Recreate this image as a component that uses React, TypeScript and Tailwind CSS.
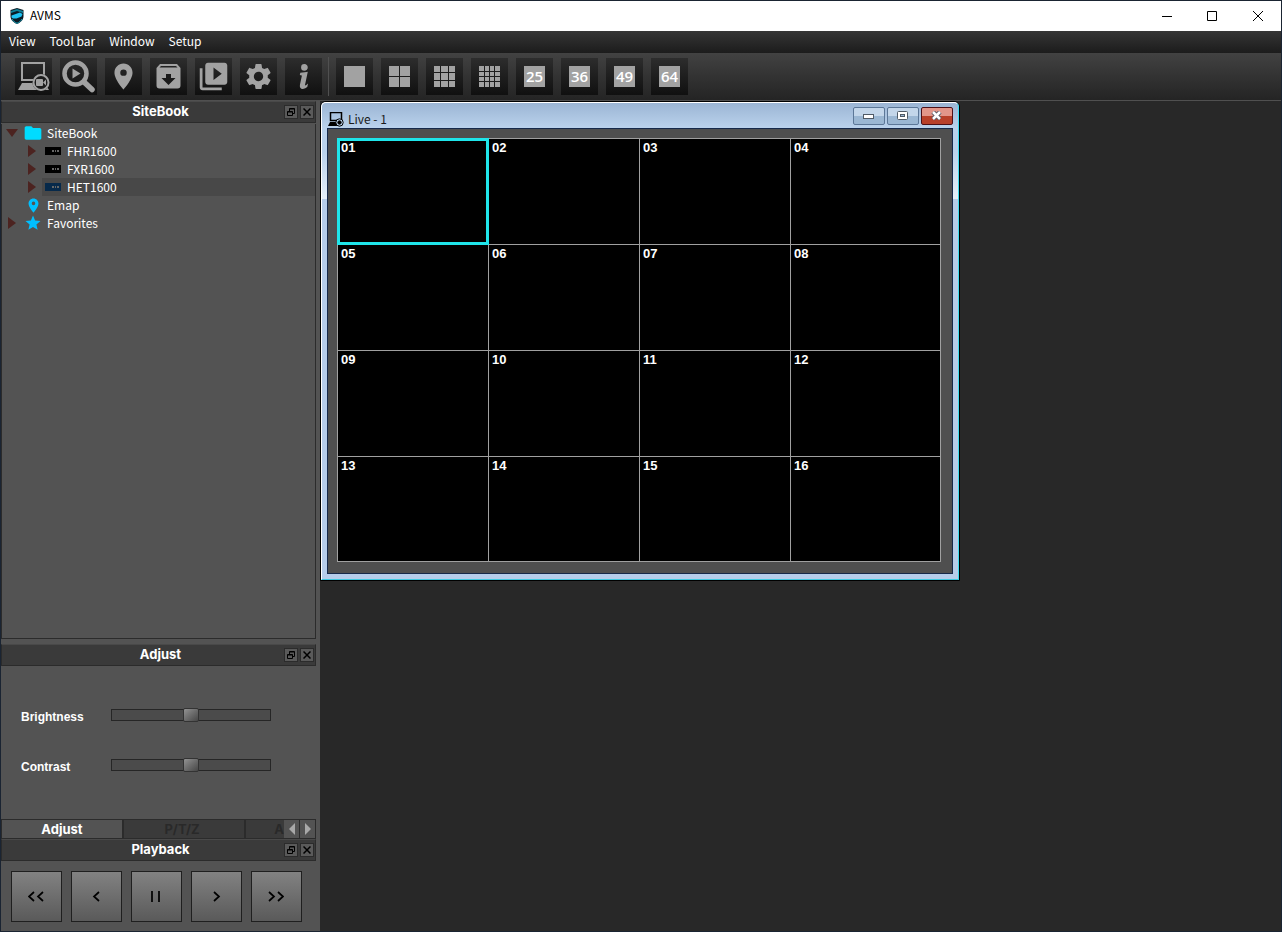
import { useState } from "react";
import type { FC, ReactNode } from "react";
import { MdFolder, MdLocationOn, MdSettings, MdStar, MdVideoLibrary } from "react-icons/md";
import { BsInfoLg } from "react-icons/bs";

const MENUS = ["View", "Tool bar", "Window", "Setup"];
const CHANNELS = Array.from({ length: 16 }, (_, i) => String(i + 1).padStart(2, "0"));

const ShieldLogo: FC = () => (
  <svg width="14" height="16" viewBox="0 0 14 16">
    <path d="M7 0 13.500 2v6c0 4-3 6.500-6.500 8C3.500 14.500.5 12 .5 8V2z" fill="#0b1c26" />
    <path d="M1 3 7 1l6 2v2L7 3 1 5z" fill="#0f7f96" />
    <path d="M1.500 7.500 10 4.500l2.500 1.500-1 2.500-5 2H3l-1.500-1z" fill="#1fc3f3" />
    <path d="M2 11c1 2 3 3.500 5 4.300 2-.8 4-2.300 5-4.300" fill="none" stroke="#12a5c0" />
  </svg>
);

const LiveIcon: FC = () => (
  <svg width="33" height="33" viewBox="0 0 33 33" fill="none" stroke="currentColor">
    <path d="M5 3h22v17H5z" strokeWidth="2" />
    <path d="M5 23h18v7H1z" fill="currentColor" stroke="none" />
    <path d="M29 25l3 5h-5z" fill="currentColor" stroke="none" />
    <circle cx="24" cy="22.500" r="8.500" fill="#1c1c1c" stroke="none" />
    <circle cx="24" cy="22.500" r="7.500" strokeWidth="2" />
    <rect x="19" y="19" width="7" height="7" rx="1" fill="currentColor" stroke="none" />
    <path d="m26 22.500 3-3v6z" fill="currentColor" stroke="none" />
  </svg>
);

const LiveSmallIcon: FC = () => (
  <svg width="16" height="15" viewBox="0 0 16 15" fill="none" stroke="#000">
    <path d="M2.500 8.500v-8h11v8z" strokeWidth="1.500" />
    <path d="M2 10h8v4H0z" fill="#000" stroke="none" />
    <circle cx="11.500" cy="10.500" r="3.700" fill="#bad2ec" />
    <circle cx="11.500" cy="10.500" r="1.700" fill="#000" />
  </svg>
);

const SearchPlayIcon: FC = () => (
  <svg width="33" height="33" viewBox="0 0 33 33" fill="none" stroke="currentColor">
    <circle cx="13.500" cy="13.500" r="11" strokeWidth="4.500" />
    <path d="m22 22 8 7.500" strokeWidth="5.500" strokeLinecap="round" />
    <path d="m10.500 8.500 8 5-8 5z" fill="currentColor" stroke="none" />
  </svg>
);

const BackupIcon: FC = () => (
  <svg width="25" height="25" viewBox="0 0 25 25" fill="currentColor">
    <path d="M4 0h17l3.500 4v17.500a3 3 0 0 1-3 3h-18a3 3 0 0 1-3-3V4z" />
    <path d="M3.500 3.500 5 2h15l1.500 1.500z" fill="#222" />
    <path d="M10 10h5v4h4.500l-7 7-7-7H10z" fill="#1a1a1a" />
  </svg>
);

const DvrIcon: FC<{ color: string }> = ({ color }) => (
  <svg width="16" height="8" viewBox="0 0 16 8">
    <rect width="16" height="8" fill={color} />
    <path d="M7 3h2v2H7zM10 3h1v2h-1zM12 3h2v2h-2z" fill="#666" />
  </svg>
);

const Grid: FC<{ lines: number[] }> = ({ lines }) => (
  <svg width="21" height="21" viewBox="0 0 21 21">
    <rect width="21" height="21" fill="#a2a2a2" />
    {lines.map((n) => (
      <path key={n} d={`M${n} 0v21M0 ${n}h21`} stroke="#1c1c1c" />
    ))}
  </svg>
);

const ToolButton: FC<{ label: string; children: ReactNode }> = ({ label, children }) => (
  <button
    type="button"
    aria-label={label}
    className="w-[37px] h-[37px] flex items-center justify-center bg-linear-to-b from-[#2d2d2d] to-[#101010] text-[#a2a2a2]"
  >
    {children}
  </button>
);

const NumberTile: FC<{ value: number }> = ({ value }) => (
  <span className="w-[21px] h-[21px] bg-[#a2a2a2] text-white text-[15px] leading-[21px] font-semibold font-['Open_Sans',sans-serif] text-center">
    {value}
  </span>
);

const PanelHeader: FC<{ title: string }> = ({ title }) => (
  <div className="relative h-[22px] shrink-0 mr-1 bg-[#3a3a3a] border border-[#2b2b2b] border-t-[#494949]">
    <h2 className="pl-1 text-center text-white text-[13px] leading-[18px] font-bold font-['Inter',sans-serif]">{title}</h2>
    <div className="absolute right-px top-[3px] flex gap-[2px]">
      <button type="button" aria-label={`Float ${title}`} className="w-[14px] h-[14px] flex items-center justify-center border border-[#2b2b2b] bg-[#5a5a5a]">
        <svg width="8" height="8" viewBox="0 0 8 8" fill="none" stroke="#000">
          <path d="M2.500 3V.5h5v5H6M2.500 1h5" />
          <path d="M.5 3.500h5v4h-5zM.5 4h5" />
        </svg>
      </button>
      <button type="button" aria-label={`Close ${title}`} className="w-[14px] h-[14px] flex items-center justify-center border border-[#2b2b2b] bg-[#5a5a5a]">
        <svg width="8" height="8" viewBox="0 0 8 8" stroke="#000" strokeWidth="1.500">
          <path d="m.5.5 7 7M7.500.5l-7 7" />
        </svg>
      </button>
    </div>
  </div>
);

const Arrow: FC<{ open?: boolean }> = ({ open }) => (
  <svg width="12" height="12" viewBox="0 0 12 12" fill="#4c2320">
    <path d={open ? "M0 2h12L6 10z" : "M2 0v12l8-6z"} />
  </svg>
);

interface TreeRowProps {
  label: string;
  icon: ReactNode;
  arrow?: "open" | "closed";
  child?: boolean;
  selected?: boolean;
}

const TreeRow: FC<TreeRowProps> = ({ label, icon, arrow, child, selected }) => (
  <li className={child ? "flex h-[18px] items-center pl-6" : "flex h-[18px] items-center pl-1"}>
    <span className="w-[16px] shrink-0">{arrow && <Arrow open={arrow === "open"} />}</span>
    <span className={selected ? "flex flex-1 h-full items-center bg-[#484848]" : "flex flex-1 h-full items-center"}>
      <span className="w-[25px] pr-[3px] flex justify-center">{icon}</span>
      {label}
    </span>
  </li>
);

const Slider: FC<{ label: string }> = ({ label }) => {
  const [value, setValue] = useState(50);
  return (
    <label className="flex h-[50px] items-center text-[12px] font-bold text-white font-['Liberation_Sans',sans-serif]">
      <span className="w-[90px]">{label}</span>
      <input
        type="range"
        value={value}
        onChange={(e) => setValue(Number(e.target.value))}
        className="w-[160px] h-[12px] mb-[4px] appearance-none border border-[#262626] bg-[#4b4b4b] [&::-webkit-slider-thumb]:appearance-none [&::-webkit-slider-thumb]:w-[16px] [&::-webkit-slider-thumb]:h-[14px] [&::-webkit-slider-thumb]:rounded-[2px] [&::-webkit-slider-thumb]:border [&::-webkit-slider-thumb]:border-[#333] [&::-webkit-slider-thumb]:bg-linear-to-br [&::-webkit-slider-thumb]:from-[#939393] [&::-webkit-slider-thumb]:to-[#474747]"
      />
    </label>
  );
};

const PLAYBACK = [
  { label: "Fast rewind", d: "M6 1 1 5.500 6 10M15 1l-5 4.500 5 4.500" },
  { label: "Reverse", d: "M11 1 6 5.500 11 10" },
  { label: "Pause", d: "M4 0v11M11 0v11" },
  { label: "Play", d: "m6 1 5 4.500L6 10" },
  { label: "Fast forward", d: "m1 1 5 4.500L1 10M10 1l5 4.500-5 4.500" },
];

const Sidebar: FC = () => (
  <aside className="w-[319px] shrink-0 flex flex-col bg-[#535353]">
    <PanelHeader title="SiteBook" />
    <ul className="flex-1 mt-px mr-1 mb-[5px] border border-[#2b2b2b] border-t-0 text-[12px] leading-[18px] text-white">
      <TreeRow label="SiteBook" arrow="open" icon={<MdFolder size={20} color="#00dcff" />} />
      <TreeRow label="FHR1600" arrow="closed" child icon={<DvrIcon color="#000" />} />
      <TreeRow label="FXR1600" arrow="closed" child icon={<DvrIcon color="#000" />} />
      <TreeRow label="HET1600" arrow="closed" child selected icon={<DvrIcon color="#06294a" />} />
      <TreeRow label="Emap" icon={<MdLocationOn size={17} color="#00bfff" />} />
      <TreeRow label="Favorites" arrow="closed" icon={<MdStar size={18} color="#00bfff" />} />
    </ul>

    <PanelHeader title="Adjust" />
    <div className="pl-5 pt-[26px] pb-[27px]">
      <Slider label="Brightness" />
      <Slider label="Contrast" />
    </div>
    <div className="flex h-[20px] mr-1 border border-[#2b2b2b] text-[13px] leading-[16px] font-bold font-['Inter',sans-serif]">
      <button type="button" className="w-[120px] bg-[#535353] text-white">Adjust</button>
      <button type="button" className="w-[122px] pr-1 border-l-2 border-[#2b2b2b] bg-[#3a3a3a] text-[#292929]">P/T/Z</button>
      <button type="button" className="flex-1 border-l-2 border-[#2b2b2b] bg-[#3a3a3a] text-[#292929] text-right">A</button>
      <button type="button" aria-label="Previous tab" className="w-[16px] flex items-center justify-center border-r border-[#2b2b2b] bg-[#535353]">
        <svg width="6" height="12" viewBox="0 0 6 12" fill="#a8a8a8"><path d="M6 0v12L0 6z" /></svg>
      </button>
      <button type="button" aria-label="Next tab" className="w-[15px] flex items-center justify-center bg-[#535353]">
        <svg width="6" height="12" viewBox="0 0 6 12" fill="#a8a8a8"><path d="M0 0v12l6-6z" /></svg>
      </button>
    </div>

    <PanelHeader title="Playback" />
    <div className="flex gap-[9px] pl-[10px] pt-[10px] pb-[9px]">
      {PLAYBACK.map(({ label, d }) => (
        <button
          key={label}
          type="button"
          aria-label={label}
          className="w-[51px] h-[51px] flex items-center justify-center pr-px border border-[#1f1f1f] bg-linear-to-b from-[#828282] to-[#5a5a5a]"
        >
          <svg width="16" height="11" viewBox="0 0 16 11" fill="none" stroke="#000" strokeWidth="1.700">
            <path d={d} />
          </svg>
        </button>
      ))}
    </div>
  </aside>
);

const FRAME_BUTTON =
  "w-[32px] h-[18px] flex items-center justify-center rounded-[2px] border border-[#5c7797] bg-linear-to-b from-[#c3d6ea] from-50% to-[#9bb7d3] to-50%";

const LiveWindow: FC = () => {
  const [active, setActive] = useState("01");
  return (
    <section className="absolute left-0 top-0 w-[640px] h-[480px] flex flex-col rounded-t-[6px] border border-black bg-[linear-gradient(to_bottom,#9ab4d3_0,#bad2ec_26px,#bad2ec_50px,#e6f0fa_97px,#b6cdea_97px)]">
      <div className="flex-1 flex flex-col rounded-t-[5px] border border-t-white border-l-white border-r-[#3fdcf0] border-b-[#3fc8e0] px-[5px] pb-[5px] overflow-hidden">
        <header className="flex h-[25px] shrink-0 items-start">
          <span className="pt-[9px] pl-px"><LiveSmallIcon /></span>
          <h1 className="pl-1 pt-[7px] text-[12px] leading-[18px] text-[#1a1a1a]">Live - 1</h1>
          <div className="ml-auto mt-[4px] flex gap-[2px]">
            <button type="button" aria-label="Minimize" className={FRAME_BUTTON}>
              <svg width="12" height="6" viewBox="0 0 12 6"><rect x=".5" y="1.500" width="10" height="4" fill="#fff" stroke="#4f5a66" /></svg>
            </button>
            <button type="button" aria-label="Maximize" className={FRAME_BUTTON}>
              <svg width="12" height="10" viewBox="0 0 12 10" fill="#fff" stroke="#4f5a66">
                <rect x=".5" y=".5" width="10" height="8" rx="1" />
                <rect x="3.500" y="3.500" width="4" height="2" fill="#9bb7d3" />
              </svg>
            </button>
            <button
              type="button"
              aria-label="Close"
              className="w-[32px] h-[18px] flex items-center justify-center rounded-[2px] border border-[#4d1118] bg-linear-to-b from-[#e2968a] from-50% to-[#b8402a] to-50%"
            >
              <svg width="12" height="10" viewBox="0 0 12 10">
                <path d="m2 1 7 7M9 1 2 8" stroke="#5b5b66" strokeWidth="4.500" />
                <path d="m2 1 7 7M9 1 2 8" stroke="#fff" strokeWidth="2.500" />
              </svg>
            </button>
          </div>
        </header>
        <div className="flex-1 flex border border-[#16294a] bg-[#4f4f4f] pt-[9px] pl-[9px] pr-[11px] pb-[11px]">
          <div className="flex-1 grid grid-cols-[150fr_150fr_150fr_149fr] grid-rows-[105fr_105fr_105fr_104fr] gap-px p-px bg-[#a0a0a0]">
            {CHANNELS.map((ch) => (
              <button
                key={ch}
                type="button"
                onClick={() => setActive(ch)}
                className={[
                  "flex items-start bg-black pl-[3px] pt-px text-[13px] leading-[16px] font-bold text-white font-['Liberation_Sans',sans-serif]",
                  active === ch ? "outline-3 -outline-offset-2 outline-[#1fe5ea]" : "",
                ].join(" ")}
              >
                {ch}
              </button>
            ))}
          </div>
        </div>
      </div>
    </section>
  );
};

const App: FC = () => (
  <div className="h-screen flex flex-col border border-[#1a2432] bg-[#282828] font-['Noto_Sans_CJK_KR',sans-serif] overflow-hidden">
    <header className="flex h-[30px] shrink-0 items-center bg-white pl-[9px]">
      <ShieldLogo />
      <span className="pl-[6px] pb-[2px] text-[12px] leading-[18px] text-black">AVMS</span>
      <div className="ml-auto flex">
        <button type="button" aria-label="Minimize window" className="w-[45px] h-[30px] flex items-center justify-center">
          <svg width="10" height="10" viewBox="0 0 10 10" stroke="#000"><path d="M0 5.500h10" /></svg>
        </button>
        <button type="button" aria-label="Maximize window" className="w-[46px] h-[30px] flex items-center justify-center">
          <svg width="10" height="10" viewBox="0 0 10 10" fill="none" stroke="#000"><path d="M.5.5h9v9h-9z" /></svg>
        </button>
        <button type="button" aria-label="Close window" className="w-[46px] h-[30px] flex items-center justify-center">
          <svg width="10" height="10" viewBox="0 0 10 10" stroke="#000"><path d="m0 0 10 10M10 0 0 10" /></svg>
        </button>
      </div>
    </header>

    <nav className="flex h-[22px] shrink-0 items-center gap-[14px] pl-2 pb-[2px] bg-linear-to-b from-[#363636] to-[#1c1c1c] text-[12px] leading-[18px] text-white">
      {MENUS.map((menu) => (
        <button key={menu} type="button">{menu}</button>
      ))}
    </nav>

    <div className="flex h-[48px] shrink-0 items-center gap-2 pl-[14px] border-b border-[#505050] bg-linear-to-b from-[#424242] to-[#242424]">
      <ToolButton label="Live"><LiveIcon /></ToolButton>
      <ToolButton label="Search"><SearchPlayIcon /></ToolButton>
      <ToolButton label="Emap"><MdLocationOn size={31} /></ToolButton>
      <ToolButton label="Backup"><BackupIcon /></ToolButton>
      <ToolButton label="Export"><MdVideoLibrary size={33} /></ToolButton>
      <ToolButton label="Settings"><MdSettings size={31} /></ToolButton>
      <ToolButton label="Information"><BsInfoLg size={31} stroke="currentColor" strokeWidth={0.8} /></ToolButton>
      <div className="w-px h-[39px] -mr-px ml-[-2px] bg-[#505050]" />
      <ToolButton label="1 channel"><Grid lines={[]} /></ToolButton>
      <ToolButton label="4 channels"><Grid lines={[10.5]} /></ToolButton>
      <ToolButton label="9 channels"><Grid lines={[6.5, 14.5]} /></ToolButton>
      <ToolButton label="16 channels"><Grid lines={[5.5, 10.5, 15.5]} /></ToolButton>
      <ToolButton label="25 channels"><NumberTile value={25} /></ToolButton>
      <ToolButton label="36 channels"><NumberTile value={36} /></ToolButton>
      <ToolButton label="49 channels"><NumberTile value={49} /></ToolButton>
      <ToolButton label="64 channels"><NumberTile value={64} /></ToolButton>
    </div>

    <div className="flex flex-1 min-h-0">
      <Sidebar />
      <main className="relative flex-1 overflow-hidden">
        <LiveWindow />
      </main>
    </div>
  </div>
);

export default App;
